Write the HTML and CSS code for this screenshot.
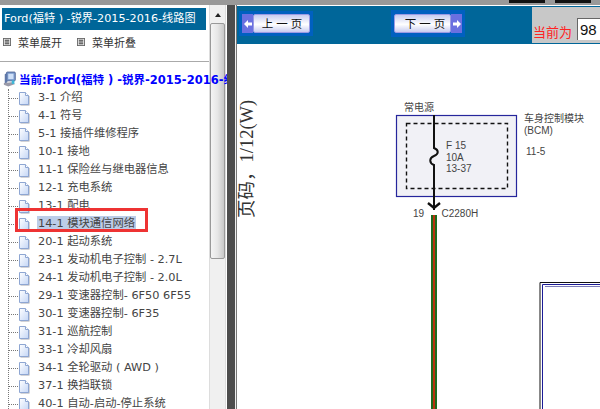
FILE: index.html
```html
<!DOCTYPE html>
<html lang="zh-CN">
<head>
  <meta charset="UTF-8" />
  <title>Ford(福特 ) -锐界-2015-2016-线路图</title>
  <link rel="stylesheet" href="styles.css">
</head>
<body>
  <svg class="icon-defs">
    <defs>
      <linearGradient id="doc-fill" x1="0" y1="0" x2="1" y2="1">
        <stop offset="0" stop-color="#fff"/>
        <stop offset="1" stop-color="#c4d6f6"/>
      </linearGradient>
    </defs>
    <symbol id="doc" viewBox="0 0 12 15">
      <path d="M2.5 2.5h6l3 3v9h-9z" fill="#a8a8ae"/>
      <path d="M1.5 1.5h6l3 3v9h-9z" fill="url(#doc-fill)" stroke="#8ea6d2"/>
      <path d="M7.5 1.5v3h3" fill="#fff" stroke="#8ea6d2"/>
    </symbol>
  </svg>

  <div class="top-strip">
    <span class="strip-tab"></span>
    <span class="strip-tab"></span>
  </div>

  <div class="main">
    <aside class="sidebar">
      <div class="side-pane">
        <div class="side-title">Ford(福特 ) -锐界-2015-2016-线路图</div>
        <div class="side-tools">
          <a class="tool"><svg class="tool-icon" viewBox="0 0 9 9"><rect x="0.5" y="0.5" width="8" height="8" fill="#eee" stroke="#666"/><path d="M2 2.5h5M2 4.5h5M2 6.5h5" stroke="#222"/></svg>菜单展开</a>
          <a class="tool"><svg class="tool-icon" viewBox="0 0 9 9"><rect x="0.5" y="0.5" width="8" height="8" fill="#eee" stroke="#666"/><path d="M2 2.5h5M2 4.5h5M2 6.5h5" stroke="#222"/></svg>菜单折叠</a>
        </div>
        <div class="side-rule"></div>

        <div class="tree-root">
          <svg class="root-icon" viewBox="0 0 16 18">
            <rect x="4" y="0.5" width="10" height="10" rx="1" fill="#7f9fd0" stroke="#4a5f90"/>
            <rect x="6" y="2.5" width="6" height="6" fill="#cfe0f8"/>
            <path d="M2 3l3-2v11l-3 2z" fill="#5f78a8"/>
            <path d="M1 13l9-1 4 2-8 3-5-2z" fill="#9a9aa8"/>
            <rect x="10" y="10" width="3" height="4" fill="#3cb8d8"/>
          </svg>
          <span>当前:Ford(福特 ) -锐界-2015-2016-线路图</span>
        </div>

        <ul class="tree">
          <li><svg class="doc"><use href="#doc"/></svg><span class="label">3-1 介绍</span></li>
          <li><svg class="doc"><use href="#doc"/></svg><span class="label">4-1 符号</span></li>
          <li><svg class="doc"><use href="#doc"/></svg><span class="label">5-1 接插件维修程序</span></li>
          <li><svg class="doc"><use href="#doc"/></svg><span class="label">10-1 接地</span></li>
          <li><svg class="doc"><use href="#doc"/></svg><span class="label">11-1 保险丝与继电器信息</span></li>
          <li><svg class="doc"><use href="#doc"/></svg><span class="label">12-1 充电系统</span></li>
          <li><svg class="doc"><use href="#doc"/></svg><span class="label">13-1 配电</span></li>
          <li class="active"><svg class="doc"><use href="#doc"/></svg><span class="label">14-1 模块通信网络</span></li>
          <li><svg class="doc"><use href="#doc"/></svg><span class="label">20-1 起动系统</span></li>
          <li><svg class="doc"><use href="#doc"/></svg><span class="label">23-1 发动机电子控制 - 2.7L</span></li>
          <li><svg class="doc"><use href="#doc"/></svg><span class="label">24-1 发动机电子控制 - 2.0L</span></li>
          <li><svg class="doc"><use href="#doc"/></svg><span class="label">29-1 变速器控制- 6F50 6F55</span></li>
          <li><svg class="doc"><use href="#doc"/></svg><span class="label">30-1 变速器控制- 6F35</span></li>
          <li><svg class="doc"><use href="#doc"/></svg><span class="label">31-1 巡航控制</span></li>
          <li><svg class="doc"><use href="#doc"/></svg><span class="label">33-1 冷却风扇</span></li>
          <li><svg class="doc"><use href="#doc"/></svg><span class="label">34-1 全轮驱动 ( AWD )</span></li>
          <li><svg class="doc"><use href="#doc"/></svg><span class="label">37-1 换挡联锁</span></li>
          <li><svg class="doc"><use href="#doc"/></svg><span class="label">40-1 自动-启动-停止系统</span></li>
        </ul>
        <div class="mark-box"></div>
      </div>

      <div class="scrollbar">
        <div class="scroll-arrow"></div>
        <div class="scroll-thumb"></div>
      </div>
    </aside>

    <div class="divider"></div>

    <section class="viewer">
      <div class="toolbar">
        <div class="pager">
          <button class="page-btn prev">
            <span class="btn-arrow"><svg viewBox="0 0 8 8"><path d="M0 4l4-4v2.5h4v3H4V8z" fill="#fff"/></svg></span>
            <span class="btn-text">上一页</span>
          </button>
          <button class="page-btn next">
            <span class="btn-text">下一页</span>
            <span class="btn-arrow"><svg viewBox="0 0 8 8"><path d="M8 4L4 0v2.5H0v3h4V8z" fill="#fff"/></svg></span>
          </button>
        </div>
        <div class="current">
          <span class="current-label">当前为</span>
          <input class="current-input" value="98">
        </div>
      </div>

      <svg class="diagram" viewBox="237 44 363 365">
        <text class="page-no" transform="translate(253 218) rotate(-90)">页码，1/12(W)</text>

        <text class="lbl cjk" x="404" y="111">常电源</text>
        <rect x="396.5" y="115.5" width="120" height="81" fill="#f1f1f6" stroke="#26269c" stroke-width="1.2"/>
        <rect x="406.5" y="123.5" width="101" height="65" fill="none" stroke="#111" stroke-width="1.4" stroke-dasharray="4 3"/>

        <path d="M434 115V148c5 2 5 6 0 8c-5 2 -5 7 0 9V210" fill="none" stroke="#111" stroke-width="2"/>
        <path d="M428 203l6 5l6 -5" fill="none" stroke="#111" stroke-width="2.4"/>
        <text class="lbl" x="446" y="149">F 15</text>
        <text class="lbl" x="446" y="161">10A</text>
        <text class="lbl" x="446" y="172">13-37</text>

        <text class="lbl cjk" x="524" y="122">车身控制模块</text>
        <text class="lbl" x="524" y="134">(BCM)</text>
        <text class="lbl" x="526" y="155">11-5</text>
        <text class="lbl" x="413" y="217">19</text>
        <text class="lbl" x="441.5" y="217">C2280H</text>

        <rect x="431" y="215" width="6" height="194" fill="#1d6b1d"/>
        <rect x="433" y="215" width="2" height="194" fill="#b8330f"/>

        <path d="M540 409V282.5H600" fill="none" stroke="#111"/>
        <path d="M542.5 409V284.5H600" fill="none" stroke="#1c1c96"/>
        <path d="M545 286.5H600" fill="none" stroke="#7c7cb8"/>
      </svg>
    </section>
  </div>
</body>
</html>
```

FILE: styles.css
```css
html, body {
  margin: 0;
  padding: 0;
  height: 409px;
  overflow: hidden;
  background-color: #fff;
  font-family: "DejaVu Sans", "Noto Sans CJK SC", sans-serif;
}
.icon-defs {
  display: block;
  width: 0;
  height: 0;
}
.top-strip {
  height: 5px;
  background-color: #999;
  display: flex;
  justify-content: flex-end;
  gap: 10px;
  padding-right: 9px;
}
.strip-tab {
  width: 36px;
  height: 3px;
  background-color: #111;
}
.main {
  display: flex;
  height: 404px;
}

/* left menu */
.sidebar {
  width: 227px;
  flex: none;
  display: flex;
  overflow: hidden;
  background-color: #fff;
}
.side-pane {
  width: 209px;
  flex: none;
  position: relative;
}
.side-title {
  margin: 3px 3px 0 2px;
  height: 22px;
  line-height: 22px;
  padding-left: 2px;
  background-color: #006699;
  color: #fff;
  font-size: 11.2px;
  white-space: nowrap;
  overflow: hidden;
}
.side-tools {
  display: flex;
  gap: 15px;
  height: 31px;
  box-sizing: border-box;
  padding: 0 0 7px 3px;
  align-items: center;
  font-size: 11px;
  color: #333;
}
.tool {
  display: flex;
  align-items: center;
  gap: 7px;
}
.tool-icon {
  width: 8px;
  height: 8px;
}
.side-rule {
  height: 1px;
  background-color: #aaa;
}
.tree-root {
  position: relative;
  z-index: 2;
  display: flex;
  align-items: center;
  gap: 2px;
  height: 18px;
  margin-top: 8px;
  padding-left: 3px;
  color: #00f;
  font-size: 11.5px;
  font-weight: bold;
  white-space: nowrap;
}
.root-icon {
  width: 14px;
  height: 17px;
  flex: none;
}
.tree {
  list-style: none;
  margin: 1px 0 0 8px;
  padding: 0;
  border-left: 1px dotted #777;
}
.tree li {
  position: relative;
  display: flex;
  align-items: center;
  height: 18px;
  padding-left: 9px;
  color: #444;
  font-size: 11.3px;
  white-space: nowrap;
}
.tree li::before {
  content: "";
  width: 9px;
  margin-left: -9px;
  border-top: 1px dotted #777;
}
.doc {
  width: 12px;
  height: 15px;
  flex: none;
}
.label {
  margin-left: 7px;
  padding: 0 1px;
  line-height: 16px;
}
.tree .active .label {
  background-color: #bccde8;
}
.mark-box {
  position: absolute;
  left: 15px;
  top: 203px;
  width: 127px;
  height: 18px;
  border: 3px solid #ee3333;
}
.scrollbar {
  width: 15px;
  flex: none;
  background-color: #f0f0f0;
  border: 1px solid #ddd;
  border-width: 0 1px;
}
.scroll-arrow {
  width: 0;
  height: 0;
  margin: 8px auto 6px;
  border: 3.5px solid transparent;
  border-top: 0;
  border-bottom: 4px solid #222;
}
.scroll-thumb {
  height: 236px;
  box-sizing: border-box;
  border: 1px solid #999;
  border-radius: 2px;
  background: linear-gradient(90deg, #f4f4f4, #e6e6e6 50%, #c8c8c8);
}
.divider {
  width: 8px;
  flex: none;
  background-color: #4d4d4d;
  border-right: 1px solid #eee;
}
.viewer {
  flex: 1;
  min-width: 0;
  border-left: 1px solid #777;
  display: flex;
  flex-direction: column;
}

/* right toolbar */
.toolbar {
  display: flex;
  height: 38px;
  margin-top: 1px;
  background-color: #006699;
}
.pager {
  width: 295px;
  flex: none;
  display: flex;
  gap: 78px;
  padding: 5px 0 0 2px;
  box-sizing: border-box;
  align-items: flex-start;
}
.page-btn {
  display: flex;
  align-items: stretch;
  width: 74px;
  height: 25px;
  padding: 3px;
  border: 0;
  background-color: #0060c0;
  font-family: "Noto Sans CJK SC", sans-serif;
}
.next {
  height: 27px;
  margin-top: -1px;
  padding: 4px 3px;
}
.btn-arrow {
  width: 11px;
  flex: none;
  display: flex;
  align-items: center;
  justify-content: center;
  background-color: #6a70e0;
}
.btn-arrow svg {
  width: 8px;
  height: 8px;
}
.btn-text {
  flex: 1;
  box-sizing: border-box;
  border: 1px solid #9a9ae4;
  border-radius: 2px;
  background: linear-gradient(#c8ccf0, #fff 55%, #c8ccf0);
  color: #111;
  font-size: 11.5px;
  letter-spacing: 3px;
  line-height: 17px;
  white-space: nowrap;
}
.prev .btn-text {
  padding-left: 4px;
}
.next .btn-text {
  padding-left: 8px;
}
.current {
  flex: 1;
  display: flex;
  align-items: flex-end;
  gap: 5px;
  margin: 1px 0;
  padding: 0 0 3px 1px;
  background-color: #c8c8c8;
  overflow: hidden;
}
.current-label {
  color: #f22;
  font-family: "Noto Sans CJK SC", sans-serif;
  font-size: 13px;
  line-height: 16px;
  white-space: nowrap;
}
.current-input {
  width: 40px;
  height: 22px;
  flex: none;
  box-sizing: border-box;
  padding: 0 2px;
  border: 0;
  border-top: 1px solid #666;
  border-left: 1px solid #666;
  background-color: #fff;
  color: #111;
  font-family: "Liberation Sans", sans-serif;
  font-size: 15px;
}

/* wiring page, drawn in page coordinates */
.diagram {
  display: block;
  width: 363px;
  height: 365px;
}
.page-no {
  font-family: "Liberation Serif", "Noto Sans CJK SC", serif;
  font-size: 18.5px;
  fill: #333;
}
.lbl {
  font-family: "Liberation Sans", sans-serif;
  font-size: 10px;
  fill: #444;
}
.cjk {
  font-family: "Noto Sans CJK SC", sans-serif;
}
```
